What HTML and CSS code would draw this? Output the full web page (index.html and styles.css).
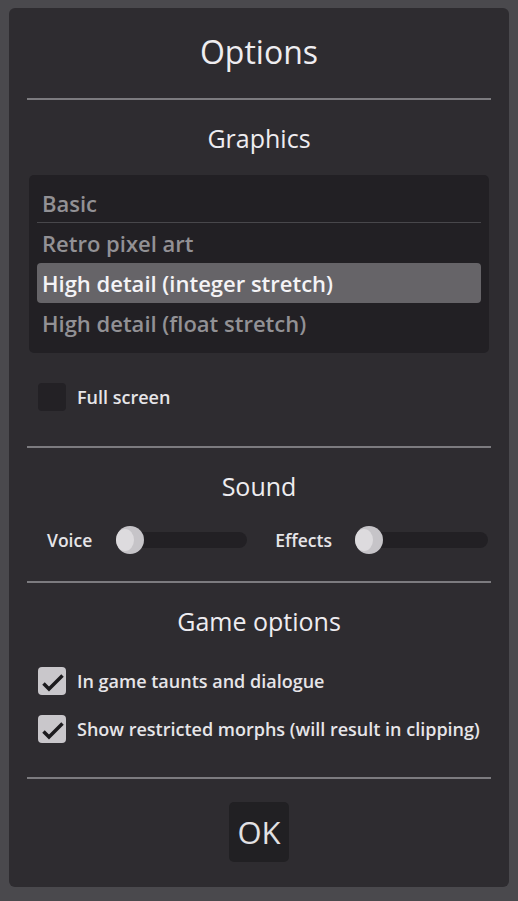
FILE: index.html
```html
<!DOCTYPE html>
<html lang="en">
<head>
  <meta charset="UTF-8" />
  <meta name="viewport" content="width=device-width, initial-scale=1.0"/>
  <title>Options</title>
  <link rel="stylesheet" href="styles.css">
</head>
<body>

<div class="panel">
  <h1 class="title">Options</h1>
  <hr class="divider">

  <h2 class="section-title graphics-title">Graphics</h2>
  <ul class="mode-list">
    <li class="mode first">Basic</li>
    <li class="mode">Retro pixel art</li>
    <li class="mode selected">High detail (integer stretch)</li>
    <li class="mode">High detail (float stretch)</li>
  </ul>

  <label class="check-row fullscreen">
    <span class="box"></span>
    <span class="check-label">Full screen</span>
  </label>

  <hr class="divider">

  <h2 class="section-title">Sound</h2>
  <div class="sliders">
    <div class="slider-group voice">
      <span class="slider-label">Voice</span>
      <div class="track"><span class="knob"></span></div>
    </div>
    <div class="slider-group effects">
      <span class="slider-label">Effects</span>
      <div class="track"><span class="knob"></span></div>
    </div>
  </div>

  <hr class="divider">

  <h2 class="section-title">Game options</h2>
  <label class="check-row taunts">
    <span class="box checked">
      <svg width="28" height="28" viewBox="0 0 28 28"><polyline points="5.5,16.5 11,22 24.5,8.5" /></svg>
    </span>
    <span class="check-label">In game taunts and dialogue</span>
  </label>
  <label class="check-row morphs">
    <span class="box checked">
      <svg width="28" height="28" viewBox="0 0 28 28"><polyline points="5.5,16.5 11,22 24.5,8.5" /></svg>
    </span>
    <span class="check-label">Show restricted morphs (will result in clipping)</span>
  </label>

  <hr class="divider last">

  <div class="actions">
    <button type="button" class="ok">OK</button>
  </div>
</div>

</body>
</html>
```

FILE: styles.css
```css
body {
  font-family: "Open Sans", "Noto Sans", sans-serif;
  background-color: #4a494d;
  color: #eeedf0;
  margin: 0;
  padding: 8px 9px 0;
}

.panel {
  background-color: #2e2c30;
  border-radius: 6px;
  padding: 22px 18px 25px;
}

.title {
  font-size: 32px;
  font-weight: normal;
  line-height: 44px;
  text-align: center;
  margin: 0 0 24px;
}

.divider {
  border: none;
  height: 2px;
  background-color: #7c7b7f;
  margin: 0;
}

.section-title {
  font-size: 25px;
  font-weight: normal;
  line-height: 32px;
  text-align: center;
  margin: 22px 0 0;
}

/* graphics mode list */
.mode-list {
  list-style: none;
  margin: 21px 2px 0;
  padding: 8px 8px 10px;
  background-color: #222024;
  border-radius: 5px;
}

.mode {
  height: 40px;
  line-height: 40px;
  padding-left: 5px;
  font-size: 22px;
  font-weight: 600;
  color: #929195;
  box-sizing: border-box;
}

.mode.first {
  border-bottom: 1px solid #48474b;
}

.mode.selected {
  background-color: #666468;
  color: #f4f3f6;
  border-radius: 4px;
}

/* checkboxes */
.check-row {
  display: flex;
  align-items: center;
  gap: 11px;
  padding-left: 11px;
  height: 28px;
}

.box {
  width: 28px;
  height: 28px;
  border-radius: 4px;
  background-color: #232125;
  flex-shrink: 0;
}

.box.checked {
  background-color: #c9c7cb;
}

.box svg polyline {
  fill: none;
  stroke: #1c1b1e;
  stroke-width: 3.5;
}

.check-label {
  font-size: 18px;
  font-weight: 600;
  color: #e6e5e8;
}

.fullscreen {
  margin: 30px 0 35px;
}

.taunts {
  margin-top: 30px;
}

.morphs {
  margin-top: 20px;
}

.last {
  margin-top: 34px;
}

/* sliders */
.sliders {
  display: flex;
  justify-content: space-between;
  padding: 0 3px 0 20px;
  margin: 26px 0 29px;
}

.slider-group {
  display: flex;
  align-items: center;
  gap: 23px;
}

.slider-label {
  font-size: 17.5px;
  font-weight: 600;
  color: #e6e5e8;
}

.track {
  position: relative;
  width: 131px;
  height: 16px;
  border-radius: 8px;
  background-color: #222024;
}

.voice .track {
  margin-left: 1px;
}

.effects .track {
  width: 133px;
}

.knob {
  position: absolute;
  left: 0;
  top: -6px;
  width: 28px;
  height: 28px;
  border-radius: 50%;
  background-color: #c6c4c8;
  overflow: hidden;
}

.knob::before {
  content: "";
  position: absolute;
  left: 0;
  top: 3px;
  width: 18px;
  height: 22px;
  border-radius: 50%;
  background-color: #dddbde;
}

/* ok button */
.actions {
  display: flex;
  justify-content: center;
  margin-top: 23px;
}

.ok {
  width: 60px;
  height: 60px;
  border: none;
  border-radius: 5px;
  background-color: #212023;
  color: #e2e1e4;
  font-family: "Open Sans", "Noto Sans", sans-serif;
  font-size: 31px;
  padding: 0;
}
```
